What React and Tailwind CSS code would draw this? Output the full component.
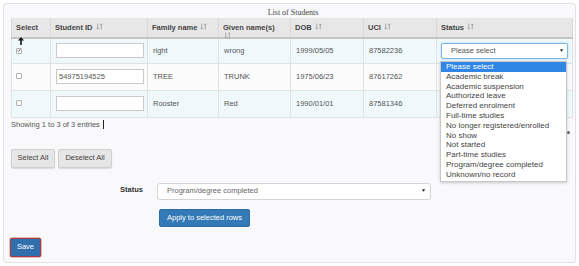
import React from 'react';

const columns = [
  { label: 'Select', width: 'w-[39px]', sort: false },
  { label: 'Student ID', width: 'w-[97px]', sort: true },
  { label: 'Family name', width: 'w-[71px]', sort: true },
  { label: 'Given name(s)', width: 'w-[72px]', sort: true, wrap: true },
  { label: 'DOB', width: 'w-[73px]', sort: true },
  { label: 'UCI', width: 'w-[73px]', sort: true },
  { label: 'Status', width: 'w-[136px]', sort: true },
];

const rows = [
  { checked: true, id: '', family: 'right', given: 'wrong', dob: '1999/05/05', uci: '87582236', h: 'h-[25px]', bg: 'bg-[#eff9fb]' },
  { checked: false, id: '54975194525', family: 'TREE', given: 'TRUNK', dob: '1975/06/23', uci: '87617262', h: 'h-[27px]', bg: 'bg-[#fbfbfc]' },
  { checked: false, id: '', family: 'Rooster', given: 'Red', dob: '1990/01/01', uci: '87581346', h: 'h-[27px]', bg: 'bg-[#eff9fb]' },
];

const options = [
  'Please select',
  'Academic break',
  'Academic suspension',
  'Authorized leave',
  'Deferred enrolment',
  'Full-time studies',
  'No longer registered/enrolled',
  'No show',
  'Not started',
  'Part-time studies',
  'Program/degree completed',
  'Unknown/no record',
];

// two thin arrows, down + up, like the datatables sort glyph
const SortIcon = ({ className = 'ml-[3px]' }) => (
  <svg viewBox="0 0 8 8" className={`${className} inline-block h-[7px] w-[7px] align-[-0.5px]`}>
    <path d="M2 0.5 V7 M0.8 5.6 L2 7 L3.2 5.6" stroke="#999" strokeWidth="0.9" fill="none" />
    <path d="M6 7.5 V1 M4.8 2.4 L6 1 L7.2 2.4" stroke="#999" strokeWidth="0.9" fill="none" />
  </svg>
);

const Checkbox = ({ checked }) => (
  <span className="inline-flex h-[6px] w-[6px] items-center justify-center rounded-[1px] border border-[#b0b0b0] bg-white">
    {checked && (
      <svg viewBox="0 0 6 6" className="h-[5px] w-[5px]">
        <path d="M1 3 L2.5 4.5 L5 1" stroke="#444" strokeWidth="1.2" fill="none" />
      </svg>
    )}
  </span>
);

const App = () => {
  return (
    <div className="h-[266px] w-[579px] overflow-hidden bg-white p-[3px] font-['Liberation_Sans',Arial,sans-serif] text-[#555]">
      <div className="relative h-[260px] w-[573px] rounded-[3px] border border-[#e2e2e6] bg-[#f9f9fb] pl-[7px]">
        <div className="h-[14px] pt-[3px] text-center font-['Liberation_Serif',serif] text-[8px] leading-[11px] text-[#444]">
          List of Students
        </div>

        <table className="w-[561px] table-fixed border-collapse">
          <thead>
            <tr className="h-[20px] border-b-2 border-[#c4c4c4] bg-[#e7e7e8]">
              {columns.map((c) =>
                c.wrap ? (
                  <th
                    key={c.label}
                    className={`${c.width} border-x border-[#d8d8d8] px-[4px] pt-[5px] pb-0 text-left align-top text-[7.5px] font-bold text-[#444]`}
                  >
                    <div className="h-[9px] leading-[9px]">{c.label}</div>
                    <div className="flex h-[4px] items-start overflow-visible">
                      <SortIcon className="ml-[1px] shrink-0" />
                    </div>
                  </th>
                ) : (
                  <th
                    key={c.label}
                    className={`${c.width} border-x border-[#d8d8d8] px-[4px] text-left align-middle text-[7.5px] font-bold text-[#444]`}
                  >
                    <div className="leading-[10px]">
                      {c.label}
                      {c.sort && <SortIcon />}
                    </div>
                  </th>
                )
              )}
            </tr>
          </thead>
          <tbody>
            {rows.map((r, i) => (
              <tr key={i} className={`${r.h} ${r.bg} border-b border-[#dde4e5] text-[7.5px]`}>
                <td className="border-x border-[#dbe3e4] px-[4px] align-middle">
                  <Checkbox checked={r.checked} />
                </td>
                <td className="border-x border-[#dbe3e4] px-[5px] align-middle">
                  <div className="flex h-[15px] w-[88px] items-center border border-[#c9c9c9] bg-white px-[2px] text-[7.5px] text-[#555]">
                    {r.id}
                  </div>
                </td>
                <td className="border-x border-[#dbe3e4] px-[5px] align-middle">{r.family}</td>
                <td className="border-x border-[#dbe3e4] px-[5px] align-middle">{r.given}</td>
                <td className="border-x border-[#dbe3e4] px-[5px] align-middle">{r.dob}</td>
                <td className="border-x border-[#dbe3e4] px-[5px] align-middle">{r.uci}</td>
                <td className="border-x border-[#dbe3e4] px-[4px] align-middle">
                  {i === 0 && (
                    <div className="flex h-[16px] w-[127px] items-center justify-between rounded-[2px] border border-[#7fb4e6] bg-white pl-[9px] pr-[3px] text-[7.5px] text-[#555] shadow-[0_0_2px_rgba(102,175,233,0.6)]">
                      <span>Please select</span>
                      <span className="text-[5px] text-[#222]">▼</span>
                    </div>
                  )}
                </td>
              </tr>
            ))}
          </tbody>
        </table>

        {/* open status dropdown */}
        <div className="absolute left-[436px] top-[57px] z-10 w-[127px] border border-[#c8c8c8] bg-white pb-[1px] text-[8px] text-[#444] shadow-[0_1px_3px_rgba(0,0,0,0.2)]">
          {options.map((o, i) => (
            <div
              key={o}
              className={`h-[9.8px] pl-[5px] leading-[9.8px] ${i === 0 ? 'bg-[#2f86e4] text-white' : ''}`}
            >
              {o}
            </div>
          ))}
        </div>

        {/* mouse pointer */}
        <svg className="absolute left-[14px] top-[33px] z-10 h-[8px] w-[6px]" viewBox="0 0 6 8">
          <path d="M3 0 L6 3.5 L3.8 3.5 L3.8 8 L2.2 8 L2.2 3.5 L0 3.5 Z" fill="#111" />
        </svg>
        <span className="absolute left-[563px] top-[127px] h-[3px] w-[3px] rounded-full bg-[#666]" />

        <div className="mt-[2px] flex h-[10px] items-center text-[7.5px]">
          Showing 1 to 3 of 3 entries
          <span className="ml-[3px] h-[9px] w-px bg-[#222]" />
        </div>

        <div className="mt-[19px] flex gap-[3px]">
          <button className="h-[19px] w-[44px] rounded-[2px] border border-[#cfcfcf] bg-[#e6e6e6] text-[7.5px] text-[#444] shadow-[0_1px_1px_rgba(0,0,0,0.12)]">
            Select All
          </button>
          <button className="h-[19px] w-[54px] rounded-[2px] border border-[#cfcfcf] bg-[#e6e6e6] text-[7.5px] text-[#444] shadow-[0_1px_1px_rgba(0,0,0,0.12)]">
            Deselect All
          </button>
        </div>

        <div className="mt-[15px] flex h-[17px] items-start">
          <div className="w-[132px] pt-[2px] text-right text-[7.5px] leading-[10px] font-bold text-[#333]">Status</div>
          <div className="ml-[14px] flex h-[17px] w-[274px] items-center justify-between rounded-[3px] border border-[#d4d4d4] bg-white pl-[9px] pr-[4px] text-[7.5px] text-[#666]">
            <span>Program/degree completed</span>
            <span className="text-[5px] text-[#222]">▼</span>
          </div>
        </div>

        <div className="mt-[9px] flex pl-[148px]">
          <button className="h-[18px] w-[91px] rounded-[2px] border border-[#2e6da4] bg-[#337ab7] text-[7.5px] text-white">
            Apply to selected rows
          </button>
        </div>

        <div className="-ml-px mt-[11px] flex">
          <button className="h-[19px] w-[31px] rounded-[2px] border-[1.5px] border-[#a83a45] bg-[#2f6fab] text-[7.5px] text-white shadow-[0_0_0_0.5px_#c77]">
            Save
          </button>
        </div>
      </div>
    </div>
  );
};

export default App;
